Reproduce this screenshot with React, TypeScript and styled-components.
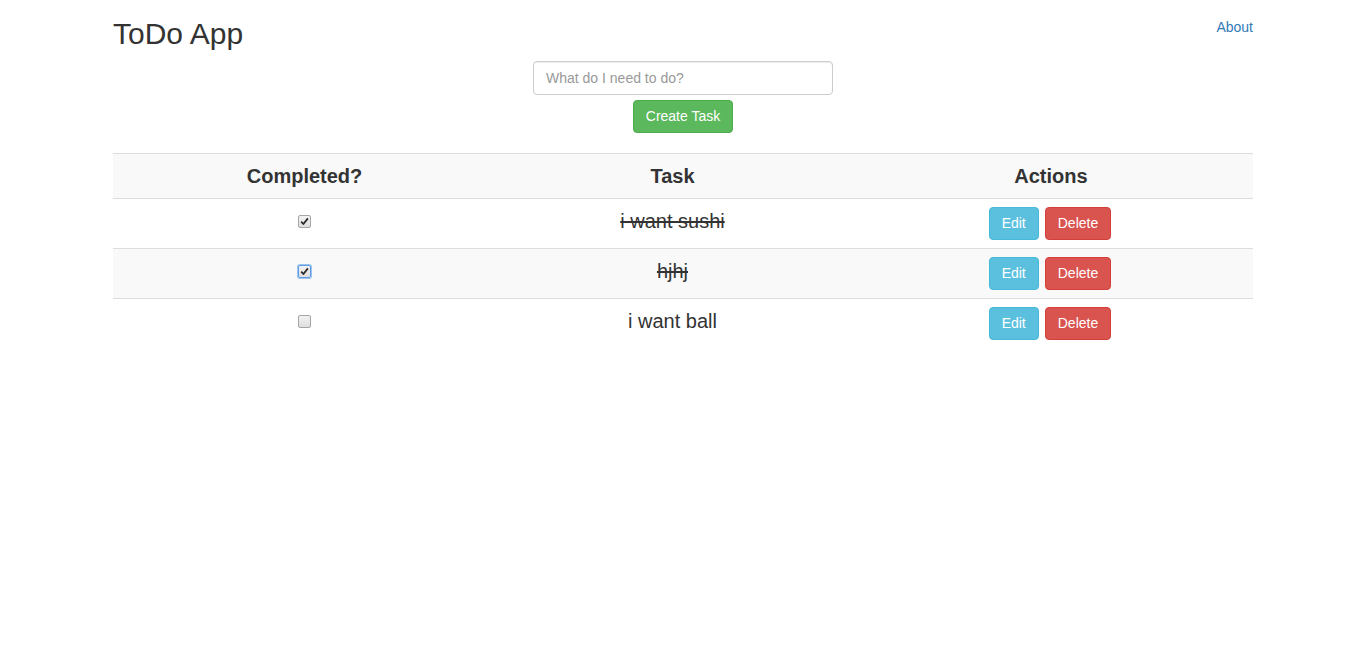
import React from "react";
import styled, { createGlobalStyle } from "styled-components";

const Global = createGlobalStyle`
  html, body { margin: 0; padding: 0; background: #fff; }
  body {
    font-family: "Liberation Sans", Arial, Helvetica, sans-serif;
    font-size: 14px;
    line-height: 1.42857;
    color: #333;
  }
`;

const Page = styled.div`
  padding-left: 4px;
`;

const Container = styled.div`
  width: 1140px;
  margin: 0 auto;
`;

const Header = styled.header`
  display: flex;
  justify-content: space-between;
  align-items: flex-start;
`;

const Title = styled.h1`
  margin: 17px 0 0;
  font-size: 30px;
  font-weight: 500;
  line-height: 33px;
  color: #333;
`;

const NavLink = styled.a`
  margin-top: 17px;
  font-size: 14px;
  line-height: 20px;
  color: #337ab7;
  text-decoration: none;
`;

const Form = styled.form`
  display: flex;
  flex-direction: column;
  align-items: center;
  gap: 5px;
  margin-top: 11px;
`;

const Input = styled.input`
  box-sizing: border-box;
  width: 300px;
  height: 34px;
  padding: 6px 12px;
  font-family: inherit;
  font-size: 14px;
  color: #555;
  border: 1px solid #ccc;
  border-radius: 4px;
  box-shadow: inset 0 1px 1px rgba(0, 0, 0, 0.075);
  outline: none;
  &::placeholder { color: #999; }
`;

const variants = {
  success: { bg: "#5cb85c", border: "#4cae4c" },
  info: { bg: "#5bc0de", border: "#46b8da" },
  danger: { bg: "#d9534f", border: "#d43f3a" },
};

const Button = styled.button<{ $variant: keyof typeof variants }>`
  box-sizing: border-box;
  height: 33px;
  padding: 0 12px;
  font-family: inherit;
  font-size: 14px;
  line-height: 31px;
  color: #fff;
  background: ${(p) => variants[p.$variant].bg};
  border: 1px solid ${(p) => variants[p.$variant].border};
  border-radius: 4px;
  cursor: pointer;
`;

const Table = styled.table`
  width: 100%;
  margin-top: 20px;
  border-collapse: collapse;
  border-spacing: 0;
`;

const Th = styled.th<{ $w: number }>`
  width: ${(p) => p.$w}px;
  padding: 8px;
  font-size: 20px;
  font-weight: 700;
  line-height: 28px;
  text-align: center;
  background: #f9f9f9;
  border-top: 1px solid #ddd;
  border-bottom: 1px solid #ddd;
`;

const Row = styled.tr<{ $striped: boolean }>`
  background: ${(p) => (p.$striped ? "#f9f9f9" : "#fff")};
`;

const Td = styled.td<{ $first: boolean }>`
  padding: 8px;
  height: 33px;
  vertical-align: top;
  text-align: center;
  border-top: ${(p) => (p.$first ? "none" : "1px solid #ddd")};
`;

const TaskText = styled.span<{ $done: boolean }>`
  font-size: 20px;
  line-height: 28px;
  text-decoration: ${(p) => (p.$done ? "line-through" : "none")};
`;

const Check = styled.span<{ $focus: boolean }>`
  display: inline-block;
  box-sizing: border-box;
  width: 13px;
  height: 13px;
  margin-top: 8px;
  border: 1px solid ${(p) => (p.$focus ? "#5b9de6" : "#a6a6a6")};
  border-radius: 2px;
  background: linear-gradient(#f2f2f2, #dedede);
  box-shadow: ${(p) => (p.$focus ? "0 0 0 1px #9cc3f0" : "none")};
  position: relative;
  svg { position: absolute; left: 1px; top: 1px; }
`;

const Actions = styled.div`
  display: flex;
  justify-content: center;
  gap: 6px;
  margin-left: -2px;
`;

const CheckBox = ({ checked, focus }: { checked: boolean; focus?: boolean }) => (
  <Check $focus={!!focus}>
    {checked && (
      <svg width="9" height="9" viewBox="0 0 9 9">
        <path d="M1.2 4.6 L3.4 7 L7.9 1.4" fill="none" stroke="#2a2a2a" strokeWidth="1.8" strokeLinejoin="round" />
      </svg>
    )}
  </Check>
);

const tasks = [
  { text: "i want sushi", done: true, focus: false },
  { text: "hjhj", done: true, focus: true },
  { text: "i want ball", done: false, focus: false },
];

export default function App() {
  return (
    <Page>
      <Global />
      <Container>
        <Header>
          <Title>ToDo App</Title>
          <NavLink href="#">About</NavLink>
        </Header>
        <Form onSubmit={(e) => e.preventDefault()}>
          <Input placeholder="What do I need to do?" />
          <Button $variant="success" type="submit">Create Task</Button>
        </Form>
        <Table>
          <thead>
            <tr>
              <Th $w={382}>Completed?</Th>
              <Th $w={354}>Task</Th>
              <Th $w={404}>Actions</Th>
            </tr>
          </thead>
          <tbody>
            {tasks.map((t, i) => (
              <Row key={i} $striped={i % 2 === 1}>
                <Td $first={i === 0}>
                  <CheckBox checked={t.done} focus={t.focus} />
                </Td>
                <Td $first={i === 0}>
                  <TaskText $done={t.done}>{t.text}</TaskText>
                </Td>
                <Td $first={i === 0}>
                  <Actions>
                    <Button $variant="info">Edit</Button>
                    <Button $variant="danger">Delete</Button>
                  </Actions>
                </Td>
              </Row>
            ))}
          </tbody>
        </Table>
      </Container>
    </Page>
  );
}
